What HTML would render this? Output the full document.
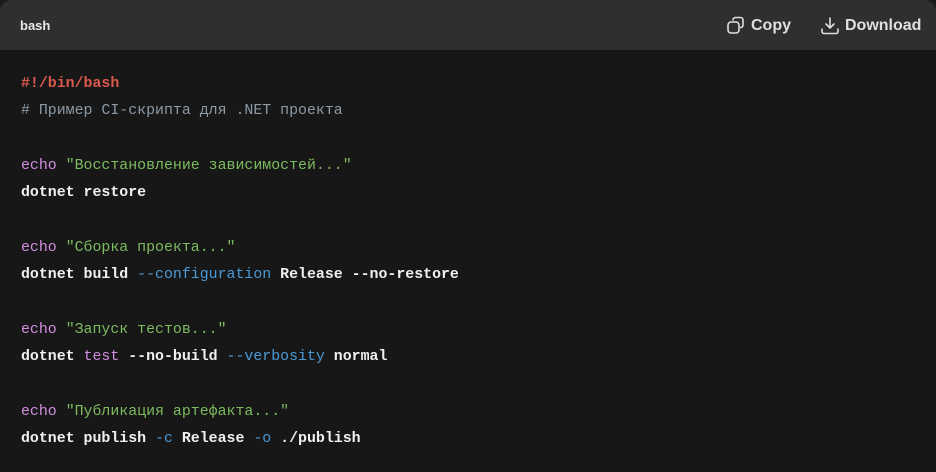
<!DOCTYPE html>
<html><head><meta charset="utf-8"><style>
html,body{margin:0;padding:0;background:#1b1b1b;width:936px;height:472px;overflow:hidden}
.wrap{position:absolute;left:0;top:0;width:936px;height:472px;background:#171717;border-radius:12px 12px 0 0;overflow:hidden}
.hdr{height:50px;background:#2f2f2f;position:relative;font-family:"Liberation Sans",sans-serif;color:#e8e8e8}
.lang{position:absolute;left:20px;top:18px;font-size:13px;font-weight:bold}
.btn{position:absolute;top:16px;font-size:16px;font-weight:bold;color:#e0e0e0;display:flex;align-items:center;gap:5px}
pre{margin:0;position:absolute;left:21px;top:71px;font-family:"Liberation Mono","DejaVu Sans Mono",monospace;font-size:14.9px;line-height:27.35px;color:#f0f0f0;font-weight:600}
.sh{color:#d9594c;font-weight:bold}.cm{color:#8c9aa6;font-weight:normal}.kw{color:#d18de0;font-weight:normal}.st{color:#7dbb5f;font-weight:normal}.fl{color:#4a9ad6;font-weight:normal}
</style></head><body><div class="wrap">
<div class="hdr"><div class="lang">bash</div>
<div class="btn" style="left:726px"><svg width="20" height="20" viewBox="0 0 20 20" fill="none" stroke="#e0e0e0" stroke-width="1.6"><rect x="2" y="6" width="11" height="11" rx="3"/><path d="M7 4.5V4a2.5 2.5 0 0 1 2.5-2.5h5A2.5 2.5 0 0 1 17 4v5a2.5 2.5 0 0 1-2.5 2.5H14"/></svg>Copy</div>
<div class="btn" style="left:820px"><svg width="20" height="20" viewBox="0 0 20 20" fill="none" stroke="#e0e0e0" stroke-width="1.6" stroke-linecap="round"><path d="M10 2v10M6 8l4 4 4-4M2 13v2.5A2 2 0 0 0 4 17.5h12a2 2 0 0 0 2-2V13"/></svg>Download</div>
</div>
<pre><span class="sh">#!/bin/bash</span>
<span class="cm"># Пример CI-скрипта для .NET проекта</span>

<span class="kw">echo</span> <span class="st">"Восстановление зависимостей..."</span>
dotnet restore

<span class="kw">echo</span> <span class="st">"Сборка проекта..."</span>
dotnet build <span class="fl">--configuration</span> Release --no-restore

<span class="kw">echo</span> <span class="st">"Запуск тестов..."</span>
dotnet <span class="kw">test</span> --no-build <span class="fl">--verbosity</span> normal

<span class="kw">echo</span> <span class="st">"Публикация артефакта..."</span>
dotnet publish <span class="fl">-c</span> Release <span class="fl">-o</span> ./publish</pre>
</div></body></html>
